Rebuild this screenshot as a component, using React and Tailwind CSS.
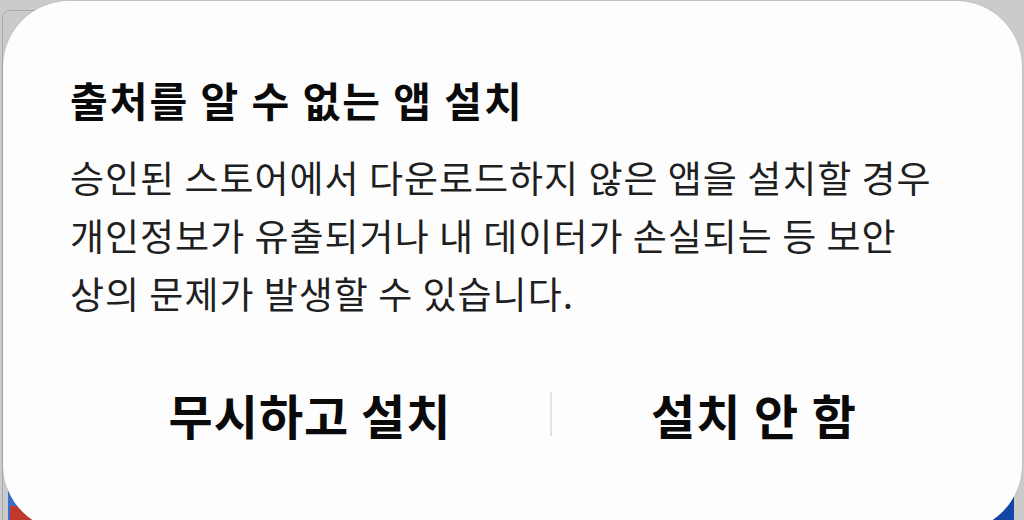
const font = { fontFamily: '"Noto Sans CJK KR", "Noto Sans", sans-serif' }

export default function App() {
  return (
    <div className="relative h-[520px] w-[1024px] overflow-hidden bg-[#cbcbcb]" style={font}>
      {/* bits of the screen behind the dialog */}
      <div className="absolute left-[2px] top-[10px] h-[520px] w-[60px] rounded-tl-[8px] border border-[#a9a9a9]" />
      <div className="absolute bottom-0 left-[8px] h-[40px] w-[30px] bg-[#3a6fd1]" />
      <div className="absolute bottom-0 left-[10px] h-[14px] w-[50px] bg-[#c0392b]" />
      <div className="absolute bottom-0 right-[10px] h-[30px] w-[40px] bg-[#1446a8]" />

      <div className="relative ml-[3px] mt-px flex h-[530px] w-[1019px] flex-col rounded-[66px] bg-[#fdfdfd] pl-[67px] shadow-[0_0_2px_rgba(0,0,0,0.15)]">
        <h1 className="mt-[72px] text-[41px] font-bold leading-[52px] tracking-[2px] text-[#0a0a0a]">
          출처를 알 수 없는 앱 설치
        </h1>
        <p className="mt-[23px] text-[37px] leading-[58px] tracking-[1px] text-[#1f1f1f]">
          승인된 스토어에서 다운로드하지 않은 앱을 설치할 경우
          <br />
          개인정보가 유출되거나 내 데이터가 손실되는 등 보안
          <br />
          상의 문제가 발생할 수 있습니다.
        </p>
        <div className="mt-[56px] flex items-center">
          <button className="h-[64px] w-[480px] text-[48px] font-bold tracking-[1px] text-[#0a0a0a]">
            무시하고 설치
          </button>
          <div className="mt-[8px] h-[44px] w-[2px] bg-[#e2e2e2]" />
          <button className="h-[64px] w-[404px] text-[48px] font-bold tracking-[1.3px] text-[#0a0a0a]">
            설치 안 함
          </button>
        </div>
      </div>
    </div>
  )
}
